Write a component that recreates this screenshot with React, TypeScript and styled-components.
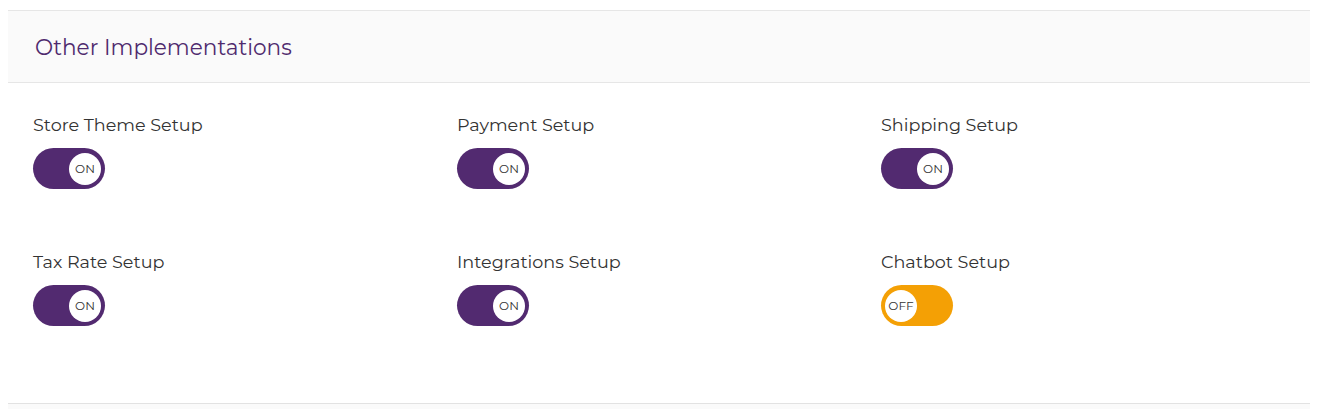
import React from "react";
import styled, { createGlobalStyle } from "styled-components";

const Global = createGlobalStyle`
  body { margin: 0; background: #ffffff; font-family: "Montserrat", "Open Sans", "Noto Sans", sans-serif; }
`;

const Page = styled.div`
  padding: 10px 10px 0 8px;
`;

const Card = styled.div`
  border-top: 1px solid #e6e6e6;
  background: #fff;
`;

const Header = styled.div`
  background: #fafafa;
  border-bottom: 1px solid #e6e6e6;
  height: 71px;
  display: flex;
  align-items: center;
  padding-left: 27px;
`;

const Title = styled.h2`
  margin: 0;
  font-size: 21.6px;
  font-weight: 400;
  color: #4f2a6e;
`;

const Body = styled.div`
  display: grid;
  grid-template-columns: repeat(3, 424px);
  row-gap: 61px;
  padding: 30px 0 77px 25px;
  border-bottom: 1px solid #e2e2e2;
`;

const Item = styled.div`
  display: flex;
  flex-direction: column;
  gap: 11px;
`;

const Label = styled.div`
  font-size: 17.6px;
  color: #333333;
  line-height: 24px;
`;

const Toggle = styled.div<{ $on: boolean }>`
  width: 72px;
  height: 41px;
  border-radius: 21px;
  background: ${(p) => (p.$on ? "#522a70" : "#f4a005")};
  display: flex;
  align-items: center;
  justify-content: ${(p) => (p.$on ? "flex-end" : "flex-start")};
  padding: 0 4px;
  box-sizing: border-box;
`;

const Knob = styled.div`
  width: 32px;
  height: 32px;
  border-radius: 50%;
  background: #fff;
  display: flex;
  align-items: center;
  justify-content: center;
  font-size: 12px;
  color: #333333;
`;

const Footer = styled.div`
  height: 6px;
  background: #fafafa;
`;

const items: [string, boolean][] = [
  ["Store Theme Setup", true],
  ["Payment Setup", true],
  ["Shipping Setup", true],
  ["Tax Rate Setup", true],
  ["Integrations Setup", true],
  ["Chatbot Setup", false],
];

export default function App() {
  return (
    <Page>
      <Global />
      <Card>
        <Header>
          <Title>Other Implementations</Title>
        </Header>
        <Body>
          {items.map(([label, on]) => (
            <Item key={label}>
              <Label>{label}</Label>
              <Toggle $on={on}>
                <Knob>{on ? "ON" : "OFF"}</Knob>
              </Toggle>
            </Item>
          ))}
        </Body>
        <Footer />
      </Card>
    </Page>
  );
}
